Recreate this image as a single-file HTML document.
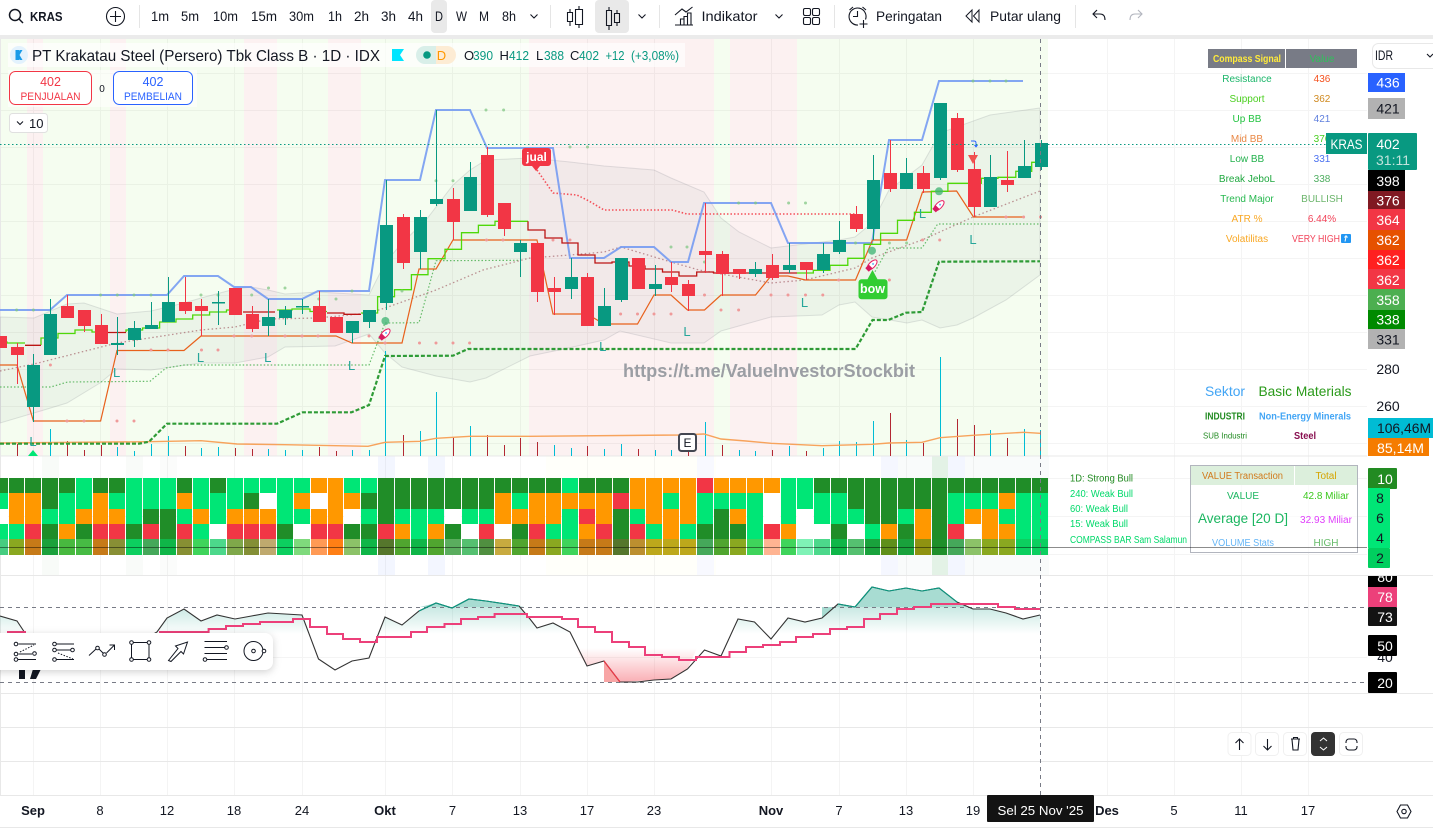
<!DOCTYPE html>
<html><head><meta charset="utf-8"><title>KRAS</title>
<style>
html,body{margin:0;padding:0;background:#fff;width:1433px;height:830px;overflow:hidden;font-family:"Liberation Sans",sans-serif}
svg{position:absolute;left:0;top:0;display:block}
svg text{font-family:"Liberation Sans",sans-serif}
.h{position:absolute;left:-8.6px;top:478px;display:flex;width:1070px;height:77px}
.c{flex:none;width:16.79px;padding:0 .5px;box-sizing:border-box}
.c i{display:block;height:15px}
.c i:nth-child(2),.c i:nth-child(5){height:16px}
.d{background:#208d28}.g{background:#00e676}.o{background:#ff9800}.r{background:#f23645}.w{background:#fff}
.t{font-size:14px;fill:#131722}
.a{font-size:13px;fill:#131722;text-anchor:middle}
.ab{font-size:13px;fill:#131722;text-anchor:middle;font-weight:bold}
.p{font-size:14px;text-anchor:middle;fill:#fff}
.s{font-size:9.5px;text-anchor:middle}
.i{fill:none;stroke:#131722;stroke-width:1.1}
.v{font-size:10px;text-anchor:middle}
</style></head><body>
<svg width="1433" height="830" viewBox="0 0 1433 830">
<defs>
<linearGradient id="tg" x1="0" y1="607" x2="0" y2="634" gradientUnits="userSpaceOnUse"><stop offset="0" stop-color="#089981" stop-opacity=".22"/><stop offset="1" stop-color="#089981" stop-opacity="0"/></linearGradient>
<linearGradient id="rg" x1="0" y1="648" x2="0" y2="682" gradientUnits="userSpaceOnUse"><stop offset="0" stop-color="#f23645" stop-opacity="0"/><stop offset="1" stop-color="#f23645" stop-opacity=".4"/></linearGradient>
</defs>
<rect x="0" y="39" width="1048" height="417" fill="#f5fdf0"/>
<g fill="#fcf1f1">
<rect x="27" y="39" width="16" height="417"/><rect x="110" y="39" width="16" height="417"/><rect x="244" y="39" width="33" height="417"/><rect x="328" y="39" width="33" height="417"/><rect x="529" y="39" width="185" height="417"/><rect x="730" y="39" width="67" height="417"/>
</g>
<g>
<rect x="42" y="456" width="17" height="119" fill="#f8fbf8"/><rect x="126" y="456" width="17" height="119" fill="#f9fbf9"/><rect x="160" y="456" width="17" height="119" fill="#fbfcfb"/><rect x="378" y="456" width="17" height="119" fill="#f3f6ff"/><rect x="428" y="456" width="17" height="119" fill="#f3f6ff"/><rect x="546" y="456" width="170" height="119" fill="#fffffa"/><rect x="697" y="456" width="17" height="119" fill="#f8f9ff"/><rect x="881" y="456" width="168" height="119" fill="#f9fbfb"/><rect x="881" y="456" width="17" height="119" fill="#f5f7ff"/><rect x="932" y="456" width="16" height="119" fill="#e3f2e6"/><rect x="948" y="456" width="17" height="119" fill="#f3f6ff"/>
</g>
<path stroke="#000" stroke-opacity=".045" fill="none" d="M33.5 39V795M100.5 39V795M167.5 39V795M234.5 39V795M302.5 39V795M385.5 39V795M452.5 39V795M520.5 39V795M587.5 39V795M654.5 39V795M771.5 39V795M839.5 39V795M906.5 39V795M973.5 39V795M1107.5 39V795M1174.5 39V795M1241.5 39V795M1308.5 39V795M0 73.5H1367M0 110.5H1367M0 147.5H1367M0 184.5H1367M0 221.5H1367M0 258.5H1367M0 295.5H1367M0 332.5H1367M0 369.5H1367M0 406.5H1367M0 443.5H1367M0 478.5H1367M0 516.5H1367M0 554.5H1367M0 657.5H1367"/>
<path stroke="#e8e8e8" stroke-width="1" fill="none" d="M0 456H1367M0 575.5H1433M0 693.5H1433M0 727.5H1433M0 761.5H1433M0 795.5H1433M0 827.5H1433M.5 39V795"/>
<path fill="#787b86" fill-opacity=".07" stroke="#787b86" stroke-opacity=".2" d="M0 317L34 318L67 304L84 303L117 314L151 311L184 303L201 298L235 289L251 287L268 290L285 294L318 292L369 295L385 263L402 243L426 220L453 185L470 170L486 160L530 158L570 162L604 166L654 170L671 178L704 192L721 218L739 232L771 248L805 244L839 240L855 237L872 223L889 190L922 165L940 133L990 115L1040 108V275L1006 300L973 318L957 325L940 328L922 320L907 323L872 317L855 302L839 305L822 315L771 317L721 331L704 343L671 343L620 331L604 340L564 349L530 356L486 378L470 382L436 376L402 367L385 353L369 334L335 346L285 347L268 357L235 363L201 363L151 370L117 369L100 383L67 403L44 410L0 423Z"/>
<path stroke="#00bcd4" fill="none" d="M50.5 429V456M117.5 447V456M134.5 451V456M151.5 444V456M168.5 436V456M201.5 448V456M218.5 447V456M268.5 449V456M285.5 450V456M302.5 450V456M352.5 450V456M369.5 450V456M385.5 351V456M420.5 431V456M436.5 392V456M470.5 426V456M554.5 445V456M571.5 448V456M604.5 449V456M621.5 444V456M655.5 450V456M671.5 450V456M705.5 422V456M739.5 450V456M755.5 451V456M789.5 446V456M823.5 448V456M839.5 441V456M856.5 442V456M873.5 421V456M906.5 440V456M940.5 357V456M990.5 430V456M1024.5 429V456M1040.5 430V456"/>
<path stroke="#b22833" fill="none" d="M17.5 444V456M67.5 441V456M84.5 450V456M101.5 445V456M185.5 446V456M235.5 448V456M252.5 449V456M319.5 447V456M336.5 451V456M403.5 435V456M453.5 437V456M487.5 435V456M504.5 445V456M520.5 438V456M537.5 442V456M587.5 446V456M638.5 449V456M688.5 449V456M722.5 445V456M772.5 450V456M806.5 451V456M890.5 413V456M923.5 443V456M957.5 419V456M974.5 425V456M1007.5 438V456"/>
<path fill="none" stroke="#f7a35c" stroke-width="1.4" d="M0 443L149 441.7L201 440.7L237 444L285 444.7L368 446.3L385 442.3L420 441.3L436 438.3L470 436.3L530 436.3L679 435L704 434L721 439L746 441L771 443.3L822 445.7L872 444.3L889 443L922 442.3L940 437.7L973 435.3L1006 433.3L1024 432.3L1040 433.3"/>
<path fill="none" stroke="#2e9b36" stroke-width="2.2" stroke-dasharray="4 2" d="M0 443.7H139L149 441.7L167 423.7H277L302.6 412.3H351.6L369 405L385 356L453 355.7L468 349H855.5L872.5 320H888.4L906 312.7L922 312L939 261.7L1040 261.3"/>
<path fill="none" stroke="#66bb6a" stroke-width="1.2" stroke-dasharray="1.5 2" d="M0 387H50.7L67.6 382L150 381.3L166 368L184 365H369L385 323L419 322.7L436 260.7L520 260.3M875 271.7L888 248H922L937.7 224H1039"/>
<path fill="none" stroke="#f44f58" stroke-width="1.6" stroke-dasharray="1.5 2" d="M537 170L553 193L577 195L589 201L604 210H672L687 214H855"/>
<path fill="none" stroke="#a05a62" stroke-opacity=".65" stroke-width="1.3" stroke-dasharray="1.5 2.5" d="M0 371L34 364L117 343L201 330L235 327L268 319L318 318L369 313L385 308L436 290L483 270L530 258L570 255L604 252L621 247L671 262L699 270L771 283L805 280L855 268L872 258L922 240L973 217L1040 191"/>
<path fill="none" stroke="#6f96f2" stroke-opacity=".85" stroke-width="2" d="M0 310H50L67 295H167L184 276H218L234 287H251L268 299H302L318 291H369L385 180H420L436 110H470L487 148H553L570 258H604L621 247H654L671 262H688L704 203H771L788 243H872L889 140H922L939 81H1023"/>
<path fill="none" stroke="#e8611c" stroke-width="1.2" d="M0 365H17L33.4 421H100.6L117 350.5H184L201 336H336L352 343H402L419 269H436L453 240H537L553 314H587L604 324H637.5L654 295H671L687.5 310H704.5L721 295H755.5L771 276H788L805.5 280H855.5L872.5 240H906.6L922.5 192L956.6 191L973.5 217H1023"/>
<path fill="none" stroke="#4fd80a" stroke-width="1.3" d="M0 342H7V343H25M41 345V338H58V333.5H75V330H92V332H108M126 332V330H142.6V328H159.6V322H176V319H192.7V315H209.6V312H226.5V310H242M277 310H292V309H310V311.5H327M361 313H377.6V312.3V296.7H394.5V289.7H411.4V274.7H428V258.7H445V249.3H461.5V232.7H478.4V225.3H495V221.3H528M797 273H813.3V270.3H830V265.3H847.8V258.3H864V244.3H880.6V233.3H897.5V220.3H914.4V212.3H931.3V191.3H947.9V183.3H981.3V178.3H998V177.3H1015.8V171.3H1031.7V162.3H1040"/>
<path fill="none" stroke="#bb1414" stroke-width="1.3" d="M25 345.3H41M108 332.5H126M243 312H275M327 313H344V314.3H361M528 221.3V230H545V238H562V243H578V255H595V263H612V262H629V266H645V269H662.5V272H679V276H696.7V272H713.6V273H797"/>
<path fill="none" stroke="#81c784" stroke-opacity=".75" stroke-width="3" stroke-linecap="round" d="M16.6 310h0M33.4 310h0M100.6 295h0M117.3 295h0M134 295h0M151 295h0M201 295h0M218 295h0M251.7 295h0M268.5 288h0M285 288h0M318.8 299h0M336 299h0M352 291h0M402 291h0M436 180.7h0M453 180.7h0M486 110h0M503.6 110h0M570 147h0M587.5 147h0M671 247h0M687 247h0M704.5 262h0M738.6 203h0M755.5 203h0M788.6 203h0M805.5 203h0M855.5 243h0M889.4 243h0M906.6 243h0M973 81h0M990 81h0M1006 81h0"/>
<path fill="none" stroke="#ef9a9a" stroke-width="3" stroke-linecap="round" d="M50.4 365h0M67 421h0M84 421h0M117 421h0M134 421h0M151 350h0M168 350h0M201.5 350h0M218 350h0M234 336h0M251.7 336h0M285 336h0M302 336h0M318 336h0M369 336h0M385 343h0M419.5 343h0M436 343h0M453 343h0M469.6 343h0M486.5 240h0M503 240h0M553 240h0M570 240h0M620.6 314h0M637.5 314h0M654 314h0M671 314h0M704.5 295h0M721 310h0M738.6 310h0M771 295h0M788 295h0M805.5 295h0M822.8 295h0M838.6 280h0M889.4 280h0M922.5 240h0M939.7 240h0M1006 217h0M1023.6 217h0M1040.5 217h0"/>
<path fill="#089981" d="M33 354h1V422h-1zM27 365h13V407h-13zM50 299h1V355h-1zM44 314h13V355h-13zM117 317h1V355h-1zM111 343h13V345h-13zM134 321h1V347h-1zM128 328h13V340h-13zM151 302h1V329h-1zM145 325h13V329h-13zM168 277h1V322h-1zM162 302h13V322h-13zM218 291h1V325h-1zM212 302h13V303.5h-13zM268 299h1V336h-1zM262 317h13V326h-13zM285 306h1V325h-1zM279 310h13V318h-13zM302 299h1V314h-1zM296 306h13V307.5h-13zM352 321h1V343h-1zM346 321h13V333h-13zM369 310h1V328h-1zM363 310h13V322h-13zM386 180h1V310h-1zM380 225h13V303h-13zM420 210h1V269h-1zM414 217h13V252h-13zM436 110h1V206h-1zM430 199h13V204h-13zM470 162h1V211h-1zM464 177h13V211h-13zM520 240h1V277h-1zM514 243h13V252h-13zM571 258h1V299h-1zM565 277h13V289h-13zM604 288h1V326h-1zM598 306h13V326h-13zM621 258h1V302h-1zM615 258h13V300h-13zM655 265h1V296h-1zM649 284h13V289h-13zM755 262h1V277h-1zM749 269h13V274h-13zM789 243h1V273h-1zM783 265h13V270h-13zM823 243h1V273h-1zM817 254h13V270h-13zM839 221h1V254h-1zM833 240h13V252h-13zM873 155h1V240h-1zM867 180h13V229h-13zM906 158h1V189h-1zM900 173h13V189h-13zM940 103h1V180h-1zM934 103h13V178h-13zM990 155h1V207h-1zM984 177h13V207h-13zM1024 140h1V178h-1zM1018 166h13V178h-13zM1041 140h1V170h-1zM1035 143h13V167h-13z"/>
<path fill="#f23645" d="M0 336h7V348h-7zM17 343h1V384h-1zM11 347h13V355h-13zM67 295h1V318h-1zM61 306h13V318h-13zM84 310h1V332h-1zM78 310h13V326h-13zM101 314h1V344h-1zM95 325h13V344h-13zM185 277h1V314h-1zM179 302h13V311h-13zM201 299h1V336h-1zM195 306h13V311h-13zM229 288h13V315h-13zM252 306h1V332h-1zM246 314h13V329h-13zM319 291h1V322h-1zM313 306h13V322h-13zM330 317h13V333h-13zM403 214h1V269h-1zM397 217h13V263h-13zM453 188h1V240h-1zM447 199h13V222h-13zM487 147h1V217h-1zM481 155h13V215h-13zM504 203h1V236h-1zM498 203h13V229h-13zM537 243h1V302h-1zM531 243h13V292h-13zM554 277h1V315h-1zM548 288h13V292h-13zM587 273h1V326h-1zM581 277h13V326h-13zM632 258h13V289h-13zM671 262h1V292h-1zM665 277h13V285h-13zM688 280h1V311h-1zM682 284h13V296h-13zM705 203h1V273h-1zM699 251h13V255h-13zM722 251h1V296h-1zM716 254h13V274h-13zM739 269h1V279h-1zM733 269h13V274h-13zM772 254h1V280h-1zM766 265h13V278h-13zM806 262h1V280h-1zM800 262h13V270h-13zM856 206h1V232h-1zM850 214h13V229h-13zM890 140h1V192h-1zM884 173h13V189h-13zM923 166h1V193h-1zM917 173h13V189h-13zM957 113h1V172h-1zM951 118h13V170h-13zM974 152h1V217h-1zM968 169h13V207h-13zM1007 151h1V192h-1zM1001 180h13V185h-13z"/>
<g fill="#3cb371" fill-opacity=".75"><circle cx="385.4" cy="321" r="4"/><circle cx="872" cy="250.7" r="4"/><circle cx="939" cy="191.3" r="4"/></g>
<g transform="translate(385 334) rotate(-45)"><ellipse rx="6.5" ry="3" fill="#fff" stroke="#e91e63"/><path d="M-7 -2.5L-2 -2.5L-2 2.5L-7 2.5Z" fill="#d81b60"/><circle cx="1.5" r="1" fill="#64b5f6"/></g>
<g transform="translate(872 265) rotate(-45)"><ellipse rx="6.5" ry="3" fill="#fff" stroke="#e91e63"/><path d="M-7 -2.5L-2 -2.5L-2 2.5L-7 2.5Z" fill="#d81b60"/><circle cx="1.5" r="1" fill="#64b5f6"/></g>
<g transform="translate(939 205.7) rotate(-45)"><ellipse rx="6.5" ry="3" fill="#fff" stroke="#e91e63"/><path d="M-7 -2.5L-2 -2.5L-2 2.5L-7 2.5Z" fill="#d81b60"/><circle cx="1.5" r="1" fill="#64b5f6"/></g>
<g font-size="13" fill="#26a69a" text-anchor="middle"><text x="33" y="446">L</text><text x="116.6" y="377">L</text><text x="200.5" y="362">L</text><text x="267.7" y="362">L</text><text x="351.6" y="370">L</text><text x="602.7" y="351">L</text><text x="687" y="336">L</text><text x="804.5" y="307">L</text><text x="922.5" y="218">L</text><text x="973" y="244">L</text></g>
<path d="M28 456L33 450L38 456Z" fill="#00e676"/>
<path d="M525 148h23a3 3 0 0 1 3 3v12a3 3 0 0 1-3 3h-8l-4 5-4-5h-7a3 3 0 0 1-3-3v-12a3 3 0 0 1 3-3z" fill="#f23645"/>
<text x="536.5" y="161" font-size="12" font-weight="bold" fill="#fff" text-anchor="middle">jual</text>
<path d="M872.5 270l5 9.3h7a3 3 0 0 1 3 3v14a3 3 0 0 1-3 3h-23a3 3 0 0 1-3-3v-14a3 3 0 0 1 3-3h6z" fill="#32cd32"/>
<text x="872.5" y="293" font-size="12.5" fill="#fff" text-anchor="middle" font-weight="bold">bow</text>
<path d="M968 155h10l-5 9z" fill="#f0524f"/>
<path d="M971 141h3q2 0 2 2v3M974.5 145l1.5 1.8 1.5-1.8" fill="none" stroke="#2962ff"/>
<rect x="679" y="434" width="17" height="17" rx="2.5" fill="#fff" stroke="#434651" stroke-width="2"/>
<text x="687.5" y="447" font-size="12" fill="#131722" text-anchor="middle">E</text>
<text x="623" y="377" font-size="18" font-weight="bold" fill="#9b9ea4" textLength="292" lengthAdjust="spacingAndGlyphs">https://t.me/ValueInvestorStockbit</text>
<path d="M0 144.5H1326" stroke="#089981" stroke-dasharray="1.5 2.5" fill="none"/>
</svg>

<div class="h">
<div class=c><i class=d></i><i class=g></i><i class=w></i><i class=g></i><i style=background:#46cc80></i></div>
<div class=c><i class=d></i><i class=o></i><i class=o></i><i class=g></i><i style=background:#8aa820></i></div>
<div class=c><i class=d></i><i class=o></i><i class=o></i><i class=r></i><i style=background:#c67a18></i></div>
<div class=c><i class=d></i><i class=d></i><i class=g></i><i class=d></i><i style=background:#1ba13c></i></div>
<div class=c><i class=d></i><i class=g></i><i class=g></i><i class=o></i><i style=background:#48b93f></i></div>
<div class=c><i class=g></i><i class=g></i><i class=o></i><i class=d></i><i style=background:#47bb44></i></div>
<div class=c><i class=d></i><i class=o></i><i class=o></i><i class=r></i><i style=background:#c67a18></i></div>
<div class=c><i class=d></i><i class=g></i><i class=o></i><i class=r></i><i style=background:#888f35></i></div>
<div class=c><i class=g></i><i class=g></i><i class=g></i><i class=d></i><i style=background:#0ccf5f></i></div>
<div class=c><i class=g></i><i class=g></i><i class=d></i><i class=r></i><i style=background:#45a85a></i></div>
<div class=c><i class=g></i><i class=g></i><i class=d></i><i class=d></i><i style=background:#0fb648></i></div>
<div class=c><i class=d></i><i class=o></i><i class=g></i><i class=r></i><i style=background:#878f33></i></div>
<div class=c><i class=g></i><i class=g></i><i class=o></i><i class=g></i><i style=background:#3fd45b></i></div>
<div class=c><i class=d></i><i class=g></i><i class=g></i><i class=w></i><i style=background:#4cd88b></i></div>
<div class=c><i class=g></i><i class=g></i><i class=o></i><i class=r></i><i style=background:#7fa84a></i></div>
<div class=c><i class=g></i><i class=d></i><i class=o></i><i class=r></i><i style=background:#848f36></i></div>
<div class=c><i class=g></i><i class=w></i><i class=o></i><i class=r></i><i style=background:#bfa96e></i></div>
<div class=c><i class=g></i><i class=g></i><i class=g></i><i class=d></i><i style=background:#0ccf5f></i></div>
<div class=c><i class=g></i><i class=o></i><i class=g></i><i class=w></i><i style=background:#7fda7c></i></div>
<div class=c><i class=o></i><i class=w></i><i class=o></i><i class=r></i><i style=background:#ff9a55></i></div>
<div class=c><i class=o></i><i class=o></i><i class=o></i><i class=r></i><i style=background:#ff7f15></i></div>
<div class=c><i class=g></i><i class=o></i><i class=w></i><i class=d></i><i style=background:#8cc268></i></div>
<div class=c><i class=g></i><i class=d></i><i class=g></i><i class=d></i><i style=background:#0fb648></i></div>
<div class=c><i class=d></i><i class=d></i><i class=d></i><i class=r></i><i style=background:#55762c></i></div>
<div class=c><i class=d></i><i class=d></i><i class=g></i><i class=o></i><i style=background:#50a52f></i></div>
<div class=c><i class=d></i><i class=d></i><i class=g></i><i class=g></i><i style=background:#0fb648></i></div>
<div class=c><i class=d></i><i class=d></i><i class=g></i><i class=o></i><i style=background:#50a52f></i></div>
<div class=c><i class=d></i><i class=d></i><i class=w></i><i class=d></i><i style=background:#5aad5e></i></div>
<div class=c><i class=d></i><i class=d></i><i class=g></i><i class=w></i><i style=background:#55c070></i></div>
<div class=c><i class=d></i><i class=d></i><i class=g></i><i class=r></i><i style=background:#508f40></i></div>
<div class=c><i class=d></i><i class=o></i><i class=o></i><i class=w></i><i style=background:#c8aa3f></i></div>
<div class=c><i class=d></i><i class=g></i><i class=o></i><i class=d></i><i style=background:#50a52f></i></div>
<div class=c><i class=d></i><i class=o></i><i class=o></i><i class=r></i><i style=background:#c67a18></i></div>
<div class=c><i class=d></i><i class=o></i><i class=o></i><i class=g></i><i style=background:#8aa820></i></div>
<div class=c><i class=g></i><i class=o></i><i class=g></i><i class=g></i><i style=background:#3fd45b></i></div>
<div class=c><i class=d></i><i class=o></i><i class=r></i><i class=o></i><i style=background:#c67a18></i></div>
<div class=c><i class=d></i><i class=o></i><i class=o></i><i class=r></i><i style=background:#c67a18></i></div>
<div class=c><i class=d></i><i class=r></i><i class=d></i><i class=d></i><i style=background:#55762c></i></div>
<div class=c><i class=o></i><i class=o></i><i class=g></i><i class=r></i><i style=background:#bc8f2f></i></div>
<div class=c><i class=o></i><i class=o></i><i class=o></i><i class=g></i><i style=background:#bda81b></i></div>
<div class=c><i class=o></i><i class=g></i><i class=o></i><i class=o></i><i style=background:#bda81b></i></div>
<div class=c><i class=o></i><i class=o></i><i class=o></i><i class=g></i><i style=background:#bda81b></i></div>
<div class=c><i class=r></i><i class=g></i><i class=g></i><i class=d></i><i style=background:#45a85a></i></div>
<div class=c><i class=o></i><i class=g></i><i class=d></i><i class=d></i><i style=background:#50a52f></i></div>
<div class=c><i class=o></i><i class=g></i><i class=o></i><i class=d></i><i style=background:#8aa820></i></div>
<div class=c><i class=o></i><i class=g></i><i class=g></i><i class=g></i><i style=background:#3fd45b></i></div>
<div class=c><i class=o></i><i class=w></i><i class=w></i><i class=r></i><i style=background:#ffb492></i></div>
<div class=c><i class=g></i><i class=g></i><i class=g></i><i class=o></i><i style=background:#3fd45b></i></div>
<div class=c><i class=g></i><i class=g></i><i class=w></i><i class=w></i><i style=background:#7ff2b6></i></div>
<div class=c><i class=d></i><i class=g></i><i class=g></i><i class=w></i><i style=background:#4cd88b></i></div>
<div class=c><i class=d></i><i class=g></i><i class=g></i><i class=d></i><i style=background:#0fb648></i></div>
<div class=c><i class=d></i><i class=d></i><i class=g></i><i class=w></i><i style=background:#55c070></i></div>
<div class=c><i class=d></i><i class=d></i><i class=d></i><i class=g></i><i style=background:#19a23c></i></div>
<div class=c><i class=d></i><i class=d></i><i class=d></i><i class=o></i><i style=background:#5f8f1a></i></div>
<div class=c><i class=d></i><i class=d></i><i class=g></i><i class=d></i><i style=background:#19a23c></i></div>
<div class=c><i class=d></i><i class=d></i><i class=o></i><i class=o></i><i style=background:#8f9211></i></div>
<div class=c><i class=d></i><i class=d></i><i class=d></i><i class=d></i><i style=background:#1f8f2a></i></div>
<div class=c><i class=d></i><i class=g></i><i class=g></i><i class=r></i><i style=background:#45a85a></i></div>
<div class=c><i class=d></i><i class=g></i><i class=o></i><i class=w></i><i style=background:#8cc268></i></div>
<div class=c><i class=d></i><i class=g></i><i class=o></i><i class=o></i><i style=background:#8aa820></i></div>
<div class=c><i class=d></i><i class=o></i><i class=g></i><i class=o></i><i style=background:#8aa820></i></div>
<div class=c><i class=d></i><i class=g></i><i class=g></i><i class=g></i><i style=background:#0ccf5f></i></div>
<div class=c><i class=d></i><i class=g></i><i class=g></i><i class=g></i><i style=background:#0ccf5f></i></div>
</div>

<svg width="1433" height="830" viewBox="0 0 1433 830">
<rect x="0" y="0" width="1433" height="35" fill="#fff"/>
<rect x="0" y="35" width="1433" height="4" fill="#ebebeb"/>
<rect x="431" y="0" width="16" height="33" rx="4" fill="#e9e9e9"/>
<rect x="595" y="0" width="34" height="33" rx="4" fill="#e9e9e9"/>
<path stroke="#e5e5e5" fill="none" d="M139.5 5V28M550.5 5V28M659.5 5V28M834.5 5V28M1075.5 5V28"/>
<circle cx="15" cy="15" r="5.5" class="i" style="stroke-width:1.5"/><path d="M19 19L23 23" class="i" style="stroke-width:1.5"/>
<text x="30" y="21" font-size="13" font-weight="bold" fill="#131722" textLength="32.5" lengthAdjust="spacingAndGlyphs">KRAS</text>
<circle cx="115.5" cy="16.5" r="9" class="i"/><path d="M115.5 11V22M110 16.5H121" class="i"/>
<text x="151" y="21" class="t" textLength="18" lengthAdjust="spacingAndGlyphs">1m</text>
<text x="181" y="21" class="t" textLength="18" lengthAdjust="spacingAndGlyphs">5m</text>
<text x="213" y="21" class="t" textLength="25" lengthAdjust="spacingAndGlyphs">10m</text>
<text x="251" y="21" class="t" textLength="26" lengthAdjust="spacingAndGlyphs">15m</text>
<text x="289" y="21" class="t" textLength="25" lengthAdjust="spacingAndGlyphs">30m</text>
<text x="328" y="21" class="t" textLength="14" lengthAdjust="spacingAndGlyphs">1h</text>
<text x="354" y="21" class="t" textLength="15" lengthAdjust="spacingAndGlyphs">2h</text>
<text x="381" y="21" class="t" textLength="15" lengthAdjust="spacingAndGlyphs">3h</text>
<text x="408" y="21" class="t" textLength="15" lengthAdjust="spacingAndGlyphs">4h</text>
<text x="435" y="21" class="t" textLength="8" lengthAdjust="spacingAndGlyphs">D</text>
<text x="456" y="21" class="t" textLength="11" lengthAdjust="spacingAndGlyphs">W</text>
<text x="479" y="21" class="t" textLength="10" lengthAdjust="spacingAndGlyphs">M</text>
<text x="502" y="21" class="t" textLength="14" lengthAdjust="spacingAndGlyphs">8h</text>
<text x="701.5" y="21" class="t" textLength="56" lengthAdjust="spacingAndGlyphs">Indikator</text>
<text x="876" y="21" class="t" textLength="66" lengthAdjust="spacingAndGlyphs">Peringatan</text>
<text x="990" y="21" class="t" textLength="71" lengthAdjust="spacingAndGlyphs">Putar ulang</text>
<path class="i" d="M530.5 14.5L534 18L537.5 14.5M638.5 14.5L642 18L645.5 14.5M775.5 14.5L779 18L782.5 14.5"/>
<path class="i" d="M567.5 12.5h5v9h-5zM570 9V12.5M570 21.5V26M575.5 9.5h7v15h-7zM579 6V9.5M579 24.5V28"/>
<path class="i" d="M606.5 10.5h5v15h-5zM609 7V10.5M609 25.5V30M614.5 13.5h5v9h-5zM617 10V13.5M617 22.5V26"/>
<path class="i" d="M675 15L682 9L686 12L692.5 7M680.5 25v-6h3.5v6M684 25v-8.5h3.5V25M687.5 25V13H691V25M675 25H693"/>
<path class="i" d="M805 8.5h4a1.5 1.5 0 0 1 1.5 1.5v4a1.5 1.5 0 0 1-1.5 1.5h-4a1.5 1.5 0 0 1-1.5-1.5v-4a1.5 1.5 0 0 1 1.5-1.5zM814 8.5h4a1.5 1.5 0 0 1 1.5 1.5v4a1.5 1.5 0 0 1-1.5 1.5h-4a1.5 1.5 0 0 1-1.5-1.5v-4a1.5 1.5 0 0 1 1.5-1.5zM805 17.5h4a1.5 1.5 0 0 1 1.5 1.5v4a1.5 1.5 0 0 1-1.5 1.5h-4a1.5 1.5 0 0 1-1.5-1.5v-4a1.5 1.5 0 0 1 1.5-1.5zM814 17.5h4a1.5 1.5 0 0 1 1.5 1.5v4a1.5 1.5 0 0 1-1.5 1.5h-4a1.5 1.5 0 0 1-1.5-1.5v-4a1.5 1.5 0 0 1 1.5-1.5z"/>
<path class="i" d="M865.5 19.5A8.5 8.5 0 1 0 858 25M857.5 11V16.5H853M849.5 10L853 7M866 10L862.5 7M863.5 20V28M859.5 24H867.5"/>
<path class="i" style="stroke-width:1" d="M972 10L966 16L972 22ZM979 10L973.5 16L979 22Z"/>
<path class="i" d="M1097 10L1093 14L1097 18M1093 14H1100Q1105 14 1105 20"/>
<path class="i" style="stroke:#b2b5be" d="M1138 10L1142 14L1138 18M1142 14H1135Q1130 14 1130 20"/>
<rect x="8" y="43" width="677" height="24" fill="#fff" fill-opacity=".65"/>
<rect x="8" y="70" width="189" height="37" fill="#fff" fill-opacity=".55"/>
<circle cx="19" cy="55" r="9" fill="#e3f2fd"/>
<path d="M15.5 50v10h3.500V50zM19.500 55l3-5h-3l-2 5 2 5h3z" fill="#1a9be8"/>
<text x="32" y="61" font-size="16" fill="#131722" textLength="348" lengthAdjust="spacingAndGlyphs">PT Krakatau Steel (Persero) Tbk Class B · 1D · IDX</text>
<path d="M392 49H404L400 55L404 61H392Z" fill="#00e5ff"/>
<path d="M425 46H436V64H425A9 9 0 0 1 425 46Z" fill="#d9efe9"/><path d="M436 46H447A9 9 0 0 1 447 64H436Z" fill="#fdecd4"/>
<circle cx="427" cy="55" r="3.8" fill="#089981"/>
<text x="441.5" y="60" font-size="13" fill="#ff9800" text-anchor="middle">D</text>
<g font-size="13" fill="#089981">
<text x="464" y="60" fill="#131722">O</text><text x="473" y="60" textLength="20" lengthAdjust="spacingAndGlyphs">390</text>
<text x="499.5" y="60" fill="#131722">H</text><text x="509" y="60" textLength="20" lengthAdjust="spacingAndGlyphs">412</text>
<text x="536" y="60" fill="#131722">L</text><text x="544" y="60" textLength="20" lengthAdjust="spacingAndGlyphs">388</text>
<text x="570" y="60" fill="#131722">C</text><text x="579" y="60" textLength="20" lengthAdjust="spacingAndGlyphs">402</text>
<text x="605.5" y="60" textLength="19" lengthAdjust="spacingAndGlyphs">+12</text>
<text x="631" y="60" textLength="48" lengthAdjust="spacingAndGlyphs">(+3,08%)</text>
</g>
<rect x="9.5" y="71.5" width="82" height="33" rx="6" fill="#fff" stroke="#f23645"/>
<text x="50.5" y="86" font-size="12.5" fill="#f23645" text-anchor="middle">402</text>
<text x="50.5" y="100" font-size="11" fill="#f23645" text-anchor="middle" textLength="60" lengthAdjust="spacingAndGlyphs">PENJUALAN</text>
<text x="102" y="92" font-size="10" fill="#131722" text-anchor="middle">0</text>
<rect x="113.5" y="71.5" width="79" height="33" rx="6" fill="#fff" stroke="#2962ff"/>
<text x="153" y="86" font-size="12.5" fill="#2962ff" text-anchor="middle">402</text>
<text x="153" y="100" font-size="11" fill="#2962ff" text-anchor="middle" textLength="58" lengthAdjust="spacingAndGlyphs">PEMBELIAN</text>
<rect x="9.5" y="113.5" width="38" height="19" rx="3" fill="#fff" stroke="#e0e0e0"/>
<path class="i" d="M17 121.5L20 124.5L23 121.5"/>
<text x="29" y="128" font-size="13" fill="#131722">10</text>
<g font-size="10">
<text x="1070" y="481.5" fill="#228b22" textLength="63" lengthAdjust="spacingAndGlyphs">1D: Strong Bull</text>
<text x="1070" y="497" fill="#00d96a" textLength="63" lengthAdjust="spacingAndGlyphs">240: Weak Bull</text>
<text x="1070" y="512" fill="#00d96a" textLength="58" lengthAdjust="spacingAndGlyphs">60: Weak Bull</text>
<text x="1070" y="527" fill="#00d96a" textLength="58" lengthAdjust="spacingAndGlyphs">15: Weak Bull</text>
<text x="1070" y="543" fill="#00d96a" textLength="117" lengthAdjust="spacingAndGlyphs">COMPASS BAR Sam Salamun</text>
</g>
<rect x="1190.5" y="465.5" width="167" height="87" fill="#fff" fill-opacity=".6" stroke="#b2b5be"/>
<rect x="1191" y="466" width="166" height="19" fill="#dcefdc"/>
<path d="M1294.5 466V485" stroke="#fff"/>
<text x="1242.5" y="479" class="v" fill="#d17a1c" textLength="81" lengthAdjust="spacingAndGlyphs">VALUE Transaction</text>
<text x="1326" y="479" class="v" fill="#d6a400">Total</text>
<text x="1243" y="499" class="v" fill="#1bb660">VALUE</text>
<text x="1326" y="499" class="v" fill="#3cc81e" textLength="46" lengthAdjust="spacingAndGlyphs">42.8 Miliar</text>
<text x="1243" y="523" style="font-size:13.5px" fill="#1bb660" text-anchor="middle" textLength="90" lengthAdjust="spacingAndGlyphs">Average [20 D]</text>
<text x="1326" y="523" class="v" fill="#e040fb" textLength="52" lengthAdjust="spacingAndGlyphs">32.93 Miliar</text>
<text x="1243" y="546" class="v" fill="#64b5f6" textLength="62" lengthAdjust="spacingAndGlyphs">VOLUME Stats</text>
<text x="1326" y="546" class="v" fill="#66bb6a">HIGH</text>
<path d="M0 547.5H1367" stroke="#000" stroke-opacity=".45" fill="none"/>
<path fill="url(#tg)" d="M0 634V616L17 621L25 633V634ZM157 634V632L167 618L184 609L201 621L217 615L235 619L251.5 616L268 613L285 614L302 615L310 634ZM378 634L385 617L402 625L419 611L436 603L452 608L469 599L486 601L519 606L530 619L537 628L553 623L570 632L572 634ZM734 634L738 619L754.5 622L767 634ZM777 634L788 618L805 622L822 618L838 604L855 607L872 587L889 591L906 588L922 591L939 588L957 602L973 609L990 609L1006 613L1023 619L1040 615V634Z"/>
<path fill="#a8dcd2" d="M822 607V618L838 604L855 607L872 587L889 591L906 588L922 591L939 588L957 602L967 607ZM420 607L436 603L449 607ZM456 607L469 599L486 601L519 606L524 607Z"/>
<path fill="url(#rg)" d="M575 648H697L687.5 669L671 679L620 682H604V661L587 666Z"/>
<path fill="#f8a5a5" d="M604 661L620 682H604Z"/>
<path d="M0 607.5H1367M0 682.5H1367" stroke="#787b86" stroke-dasharray="4 4" fill="none"/>
<path fill="none" stroke="#333" stroke-width="1.1" d="M0 616L17 621L25 633L33 645L50 660L67 665L100 660L134 645L157 632L167 618L184 609L201 621L217 615L235 619L251.5 616L268 613L285 614L302 615L318.5 659L335 670L352 661L369 658L385 617L402 625L419 611L436 603L452 608L469 599L486 601L519 606L530 619L537 628L553 623L570 632L587 666L604 661L620 682L637.5 682L654 680L671 679L687.5 669L704.5 650L721 656L738 619L754.5 622L771 639L788 618L805 622L822 618L838 604L855 607L872 587L889 591L906 588L922 591L939 588L957 602L973 609L990 609L1006 613L1023 619L1040 615"/>
<path fill="none" stroke="#089981" stroke-width="1.1" d="M419 611L436 603L452 608L469 599L486 601L519 606M838 604L855 607L872 587L889 591L906 588L922 591L939 588L957 602"/>
<path fill="none" stroke="#f23645" stroke-width="1.1" d="M604 661L620 682"/>
<path fill="none" stroke="#ec407a" stroke-width="2" d="M7 632H25V650H160V632H208.6V629H226V626H243V624H260V622H293V619H310V627H327V634H343V639H360V642H377V637H411V632H427V627H444.5V624H461V619H478V617H494.6V614H527V617H562V619H578V627H595V632H612V642H629V647H645V655H662V657H679V660H696V657H729.5V652H746V647H763V645H780V642H796V637H813V634H830V629H847V627H864V619H880V614H897V609H914V607H931V604H998V607H1015V609H1040"/>
<path d="M1040.5 39V795" stroke="#787b86" stroke-dasharray="4 4" fill="none"/>
<path d="M19 669h6v10h-6zM33 669h8l-5 10h-6z" fill="#131722"/>
<rect x="-10" y="633" width="283" height="37" rx="8" fill="#fff" style="filter:drop-shadow(0 2px 4px rgba(0,0,0,.18))"/>
<g>
<path class="i" style="stroke-width:1" d="M18.5 644H36M18 659.5H36M18.5 654H32"/><path class="i" style="stroke-width:1;stroke-dasharray:1.5 1.5" d="M20 652L34 645"/>
<circle cx="16" cy="644" r="1.8" class="i" style="stroke-width:1"/><circle cx="16" cy="654" r="1.8" class="i" style="stroke-width:1"/><circle cx="16" cy="659.5" r="1.8" class="i" style="stroke-width:1"/><circle cx="34.5" cy="653.5" r="1.8" class="i" style="stroke-width:1"/>
<path class="i" style="stroke-width:1" d="M56.5 644H74M56.5 650H71M56.5 659.5H74"/><path class="i" style="stroke-width:1;stroke-dasharray:1.5 1.5" d="M58 653L73 659"/>
<circle cx="54.5" cy="644" r="1.8" class="i" style="stroke-width:1"/><circle cx="54.5" cy="650" r="1.8" class="i" style="stroke-width:1"/><circle cx="54.5" cy="659.5" r="1.8" class="i" style="stroke-width:1"/><circle cx="72.5" cy="650" r="1.8" class="i" style="stroke-width:1"/>
<path class="i" style="stroke-width:1" d="M89 655.5L96 649M99 649L103.5 653.5M106.5 653L114.5 645M109.5 645H114.5V650"/>
<circle cx="97.5" cy="648" r="1.8" class="i" style="stroke-width:1"/><circle cx="104.5" cy="654.5" r="1.8" class="i" style="stroke-width:1"/>
<path class="i" style="stroke-width:1" d="M133.5 642.5H147.5M133.5 659.5H147.5M131.5 644.5V657.5M149 644.5V657.5"/>
<circle cx="131.5" cy="642.5" r="1.8" class="i" style="stroke-width:1"/><circle cx="149" cy="642.5" r="1.8" class="i" style="stroke-width:1"/><circle cx="131.5" cy="659.5" r="1.8" class="i" style="stroke-width:1"/><circle cx="149" cy="659.5" r="1.8" class="i" style="stroke-width:1"/>
<path class="i" style="stroke-width:1" d="M168.5 660.5L178 648.5L175.5 646L187.5 642L183.5 654L181 651.5L171 661.5Z"/>
<path class="i" style="stroke-width:1" d="M204.5 641.5H227M204.5 647.5H224.5M204.5 653.5H227M207 659.5H227"/>
<circle cx="226.5" cy="647.5" r="1.8" class="i" style="stroke-width:1"/><circle cx="205" cy="659.5" r="1.8" class="i" style="stroke-width:1"/>
<circle cx="253.5" cy="651" r="9.5" class="i" style="stroke-width:1"/><circle cx="253.5" cy="651" r="1.8" class="i" style="stroke-width:1"/><circle cx="264" cy="651" r="1.8" class="i" style="stroke-width:1;fill:#fff"/>
</g>
<rect x="1208" y="49" width="77" height="19" fill="#787b86"/><rect x="1286" y="49" width="71" height="19" fill="#787b86"/>
<text x="1247" y="62" font-size="10" font-weight="bold" fill="#ffeb3b" text-anchor="middle" textLength="68" lengthAdjust="spacingAndGlyphs">Compass Signal</text>
<text x="1322" y="62" font-size="10" fill="#2fc05a" text-anchor="middle">Value</text>
<g font-size="10" text-anchor="middle">
<text x="1247" y="82" fill="#1bb66a">Resistance</text><text x="1322" y="82" fill="#f4511e">436</text>
<text x="1247" y="102" fill="#4ccf20">Support</text><text x="1322" y="102" fill="#d08a20">362</text>
<text x="1247" y="122" fill="#22c340">Up BB</text><text x="1322" y="122" fill="#5f7fdd">421</text>
<text x="1247" y="142" fill="#e98845">Mid BB</text><text x="1322" y="142" fill="#4acf20">376</text>
<text x="1247" y="162" fill="#22b14c">Low BB</text><text x="1322" y="162" fill="#4a70f0">331</text>
<text x="1247" y="182" fill="#1fa83f">Break JeboL</text><text x="1322" y="182" fill="#4fae60">338</text>
<text x="1247" y="202" fill="#27b84f">Trend Major</text><text x="1322" y="202" fill="#6cb56c">BULLISH</text>
<text x="1247" y="222" fill="#f9a825">ATR %</text><text x="1322" y="222" fill="#f2445a">6.44%</text>
<text x="1247" y="242" fill="#f9a825">Volatilitas</text><text x="1316" y="242" fill="#f2445a" textLength="48" lengthAdjust="spacingAndGlyphs">VERY HIGH</text>
</g>
<rect x="1341" y="234" width="10" height="9" rx="1" fill="#2196f3"/><path d="M1345 241.5L1346 237M1344.5 237.5L1346 235.8L1347.5 237.5" stroke="#fff" fill="none"/>
<text x="1205" y="396" font-size="14" fill="#42a5f5" textLength="40" lengthAdjust="spacingAndGlyphs">Sektor</text>
<text x="1258.5" y="396" font-size="14" fill="#2a9a1a" textLength="93" lengthAdjust="spacingAndGlyphs">Basic Materials</text>
<text x="1205" y="419.5" font-size="10" font-weight="bold" fill="#228b22" textLength="40" lengthAdjust="spacingAndGlyphs">INDUSTRI</text>
<text x="1259" y="419.5" font-size="10" font-weight="bold" fill="#42a5f5" textLength="92" lengthAdjust="spacingAndGlyphs">Non-Energy Minerals</text>
<text x="1203" y="438.5" font-size="8.5" fill="#228b22" textLength="44" lengthAdjust="spacingAndGlyphs">SUB Industri</text>
<text x="1294" y="439" font-size="10" fill="#880e4f" font-weight="bold" textLength="22" lengthAdjust="spacingAndGlyphs">Steel</text>
<rect x="1367" y="39" width="66" height="420" fill="#fff"/>
<rect x="1372.5" y="43.5" width="70" height="25" rx="6" fill="#fff" stroke="#e8e8e8"/>
<text x="1375" y="60" font-size="14" fill="#131722" textLength="18" lengthAdjust="spacingAndGlyphs">IDR</text>
<path class="i" d="M1427 54L1430 57L1433 54"/>
<rect x="1368" y="73" width="37" height="19" fill="#2962ff"/><text x="1388" y="87.5" class="p">436</text>
<rect x="1368" y="98" width="37" height="21" fill="#b2b2b2"/><text x="1388" y="113.5" class="p" style="fill:#131722">421</text>
<rect x="1326" y="133" width="41" height="21" fill="#089981"/><text x="1346.5" y="149" class="p" textLength="32" lengthAdjust="spacingAndGlyphs">KRAS</text>
<rect x="1368" y="133" width="49" height="37" rx="1" fill="#089981"/><text x="1388" y="149" class="p">402</text><text x="1393" y="165" class="p" style="fill:#c2e3dc">31:11</text>
<rect x="1368" y="170" width="37" height="21" fill="#000"/><text x="1388" y="186" class="p">398</text>
<rect x="1368" y="191" width="37" height="18" fill="#801922"/><text x="1388" y="205.5" class="p">376</text>
<rect x="1368" y="209" width="37" height="21" fill="#f23645"/><text x="1388" y="225" class="p">364</text>
<rect x="1368" y="230" width="37" height="20" fill="#e65100"/><text x="1388" y="245" class="p">362</text>
<rect x="1368" y="250" width="37" height="19" fill="#ff2020"/><text x="1388" y="265" class="p">362</text>
<rect x="1368" y="269" width="37" height="20" fill="#f23645"/><text x="1388" y="285" class="p">362</text>
<rect x="1368" y="289" width="37" height="21" fill="#4caf50"/><text x="1388" y="305" class="p">358</text>
<rect x="1368" y="310" width="37" height="19" fill="#008a00"/><text x="1388" y="324.5" class="p">338</text>
<rect x="1368" y="329" width="37" height="20" fill="#b2b2b2"/><text x="1388" y="344.5" class="p" style="fill:#131722">331</text>
<text x="1388" y="374" class="p" style="fill:#131722">280</text>
<text x="1388" y="411" class="p" style="fill:#131722">260</text>
<rect x="1368" y="418" width="65" height="20" fill="#00bcd4"/><text x="1377" y="433" font-size="14" fill="#131722" textLength="54" lengthAdjust="spacingAndGlyphs">106,46M</text>
<rect x="1368" y="438" width="61" height="18" fill="#f57c00"/><text x="1377" y="453" font-size="14" fill="#fff" textLength="47" lengthAdjust="spacingAndGlyphs">85,14M</text>
<rect x="1368" y="468" width="29" height="21" rx="1" fill="#228b22"/><text x="1385" y="484" class="p">10</text>
<rect x="1368" y="488" width="22" height="20" fill="#00e676"/><text x="1380" y="503" class="p" style="fill:#131722">8</text>
<rect x="1368" y="508" width="22" height="20" fill="#00e676"/><text x="1380" y="523" class="p" style="fill:#131722">6</text>
<rect x="1368" y="528" width="22" height="20" fill="#00e676"/><text x="1380" y="543" class="p" style="fill:#131722">4</text>
<rect x="1368" y="548" width="22" height="20" rx="1" fill="#00cf5f"/><text x="1380" y="563" class="p" style="fill:#131722">2</text>
<rect x="1368" y="576" width="29" height="11" fill="#000"/><text x="1385" y="582" class="p">80</text>
<rect x="1367" y="568" width="40" height="7" fill="#fff"/>
<rect x="1367" y="575" width="66" height="1" fill="#e8e8e8"/>
<rect x="1368" y="587" width="29" height="20" fill="#ec407a"/><text x="1385" y="602" class="p">78</text>
<rect x="1368" y="607" width="29" height="19" rx="1" fill="#131313"/><text x="1385" y="622" class="p">73</text>
<text x="1385" y="662" class="p" style="fill:#131722">40</text>
<rect x="1368" y="635" width="29" height="21" rx="1" fill="#000"/><text x="1385" y="651" class="p">50</text>
<rect x="1368" y="672" width="29" height="21" rx="1" fill="#000"/><text x="1385" y="688" class="p">20</text>
<g fill="#fff" stroke="#f0f0f0">
<rect x="1228" y="732.5" width="23" height="23" rx="4"/><rect x="1255.5" y="732.5" width="23" height="23" rx="4"/><rect x="1283.5" y="732.5" width="23" height="23" rx="4"/><rect x="1339.5" y="732.5" width="23" height="23" rx="4"/>
</g>
<rect x="1311" y="732" width="24" height="24" rx="4" fill="#333"/>
<path class="i" d="M1239.5 750V739M1235.5 743L1239.5 739L1243.5 743"/>
<path class="i" d="M1267.5 739V750M1263.5 746L1267.5 750L1271.5 746"/>
<path class="i" d="M1291 739H1300M1293.5 739V737.5H1297.5V739M1292 739.5L1293 750H1298L1299 739.5"/>
<path fill="none" stroke="#fff" d="M1320 741L1323.5 738L1327 741M1320 747L1323.5 750L1327 747"/>
<path class="i" d="M1346 743V742a3 3 0 0 1 3-3h5a3 3 0 0 1 3 3v1M1346 746v1a3 3 0 0 0 3 3h5a3 3 0 0 0 3-3v-1"/>
<text x="33" y="815" class="ab">Sep</text><text x="100" y="815" class="a">8</text><text x="167" y="815" class="a">12</text><text x="234" y="815" class="a">18</text><text x="302" y="815" class="a">24</text>
<text x="385" y="815" class="ab">Okt</text><text x="452.5" y="815" class="a">7</text><text x="520" y="815" class="a">13</text><text x="587" y="815" class="a">17</text><text x="654" y="815" class="a">23</text>
<text x="771" y="815" class="ab">Nov</text><text x="839" y="815" class="a">7</text><text x="906" y="815" class="a">13</text><text x="973" y="815" class="a">19</text>
<rect x="987" y="795" width="107" height="27" rx="1" fill="#131313"/>
<text x="1040.5" y="815" font-size="13" fill="#fff" text-anchor="middle" textLength="86" lengthAdjust="spacingAndGlyphs">Sel 25 Nov '25</text>
<text x="1107" y="815" class="ab">Des</text><text x="1174" y="815" class="a">5</text><text x="1241" y="815" class="a">11</text><text x="1308" y="815" class="a">17</text>
<path class="i" d="M1397 811.5L1400.5 805H1407.5L1411 811.5L1407.5 818H1400.5Z"/><circle cx="1404" cy="811.5" r="2.2" class="i"/>
</svg>
</body></html>
